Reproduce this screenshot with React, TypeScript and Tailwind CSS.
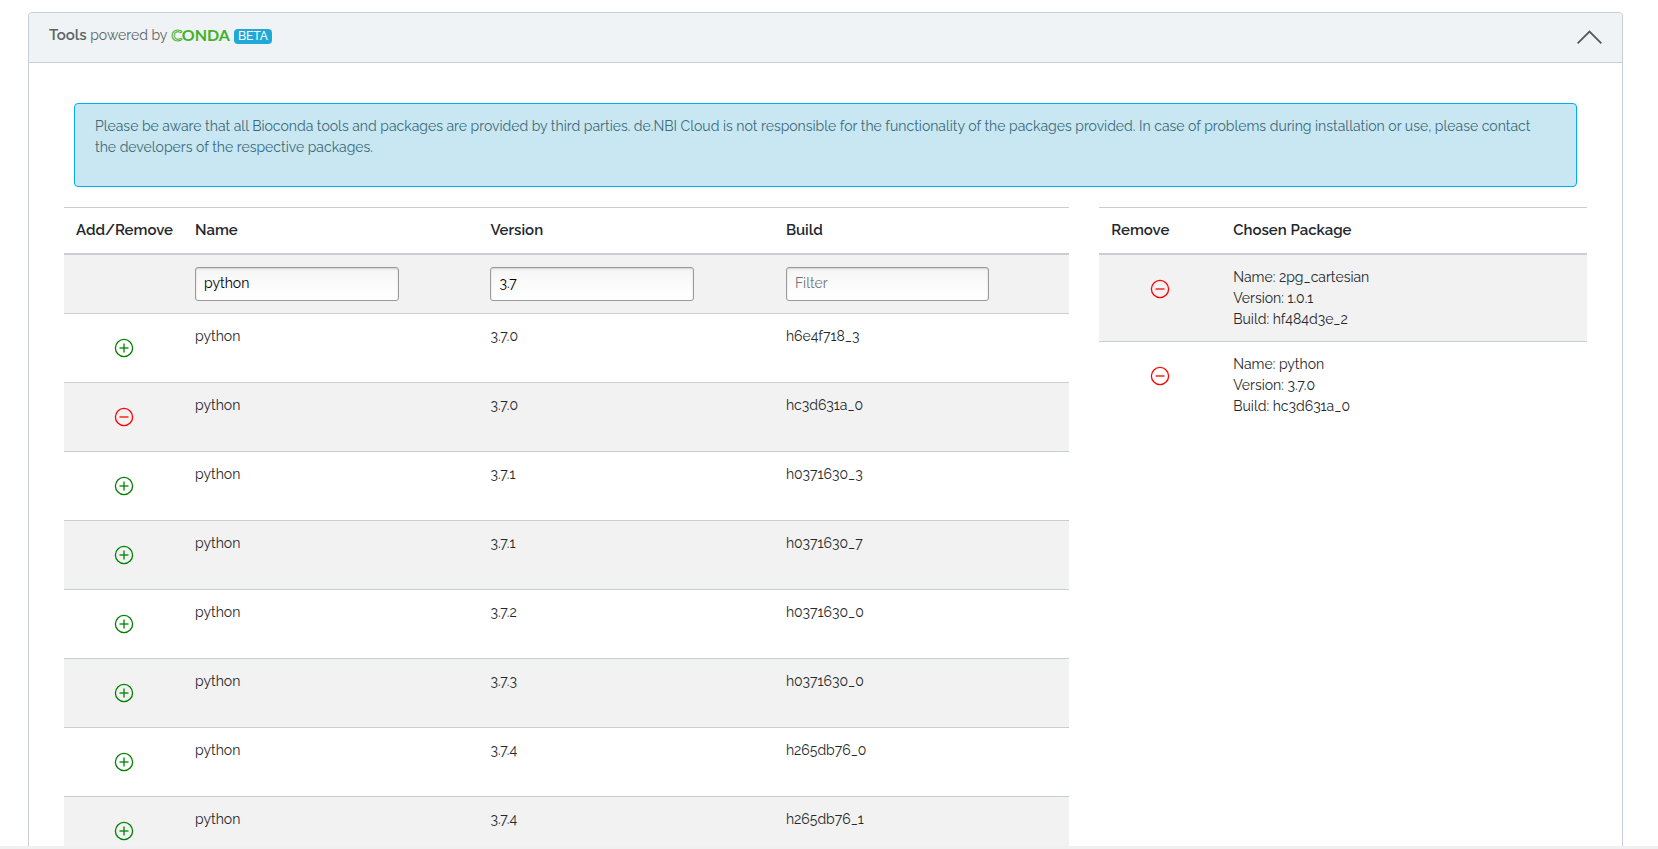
import { useState } from "react";

type Pkg = { name: string; version: string; build: string };

const packages: Pkg[] = [
  { name: "python", version: "3.7.0", build: "h6e4f718_3" },
  { name: "python", version: "3.7.0", build: "hc3d631a_0" },
  { name: "python", version: "3.7.1", build: "h0371630_3" },
  { name: "python", version: "3.7.1", build: "h0371630_7" },
  { name: "python", version: "3.7.2", build: "h0371630_0" },
  { name: "python", version: "3.7.3", build: "h0371630_0" },
  { name: "python", version: "3.7.4", build: "h265db76_0" },
  { name: "python", version: "3.7.4", build: "h265db76_1" },
];

const initialChosen: Pkg[] = [
  { name: "2pg_cartesian", version: "1.0.1", build: "hf484d3e_2" },
  { name: "python", version: "3.7.0", build: "hc3d631a_0" },
];

const same = (a: Pkg, b: Pkg) =>
  a.name === b.name && a.version === b.version && a.build === b.build;

function CircleButton({ kind, label, onClick }: { kind: "add" | "remove"; label: string; onClick: () => void }) {
  return (
    <button
      type="button"
      aria-label={label}
      onClick={onClick}
      className={`mx-auto flex size-11 items-center justify-center ${kind === "add" ? "text-[#008000]" : "text-[#ff0000]"}`}
    >
      <svg width="20" height="20" viewBox="0 0 20 20" fill="none" stroke="currentColor" strokeWidth="1.3" aria-hidden="true">
        <circle cx="10" cy="10" r="8.6" />
        <path d="M5.5 10h9" />
        {kind === "add" && <path d="M10 5.5v9" />}
      </svg>
    </button>
  );
}

function FilterCell({ label, value, onChange }: { label: string; value: string; onChange: (v: string) => void }) {
  return (
    <td className="border-t border-[#c8ced3] p-3">
      <input
        type="text"
        aria-label={label}
        placeholder="Filter"
        value={value}
        onChange={(e) => onChange(e.target.value)}
        className="block h-[34px] w-3/4 rounded-[3px] border border-[#999] bg-linear-to-b from-[#f6f6f6] to-white px-2 pb-0.5 text-black shadow-[inset_0_1px_2px_rgba(0,0,0,0.15)] placeholder:text-[#757575]"
      />
    </td>
  );
}

const th = "border-t border-b-2 border-[#c8ced3] p-3 text-left text-[15px] leading-[21px] font-semibold whitespace-nowrap";
const td = "border-t border-[#c8ced3] p-3 align-top";
const chosenTd = "border-t border-[#c8ced3] px-3 pt-3 pb-[11px] align-top";

export default function App() {
  const [open, setOpen] = useState(true);
  const [filters, setFilters] = useState({ name: "python", version: "3.7", build: "" });
  const [chosen, setChosen] = useState(initialChosen);

  const add = (p: Pkg) => setChosen((c) => [...c, p]);
  const remove = (p: Pkg) => setChosen((c) => c.filter((q) => !same(p, q)));
  const visible = packages.filter(
    (p) => p.name.includes(filters.name) && p.version.includes(filters.version) && p.build.includes(filters.build),
  );

  return (
    <div className="flex h-screen flex-col bg-[#f0f0f0] font-['Raleway','Lato',sans-serif] text-sm leading-[21px] text-[#23282c]">
      <main className="min-h-0 flex-1 overflow-hidden bg-white pt-3 pr-[35px] pl-7">
        <section className="rounded border border-[#c8ced3]">
          <header className="flex items-center justify-between rounded-t border-b border-[#c8ced3] bg-[#f0f3f5] px-5 py-3">
            <h2 className="flex h-[25px] items-start text-[#5c6366]">
              <span>
                <strong className="text-[15px] leading-[21px] font-semibold">Tools</strong> powered by
              </span>
              <span className="ml-1 font-['Lato',sans-serif] text-base leading-5 font-bold text-[#43b02a]" aria-label="CONDA">
                <span className="text-[#f0f3f5] [-webkit-text-stroke:1px_#43b02a]">C</span>ONDA
              </span>
              <span className="mt-1 ml-1 rounded bg-[#20a8d8] px-1 text-xs leading-[15px] font-medium text-white">BETA</span>
            </h2>
            <button type="button" aria-label="Toggle tools" aria-expanded={open} onClick={() => setOpen(!open)}>
              <svg width="25" height="16" viewBox="0 0 25 16" fill="none" stroke="#54585c" strokeWidth="1.8" aria-hidden="true">
                <path d="M.6 13.4 12.5 1.5 24.4 13.4" />
              </svg>
            </button>
          </header>
          {open && (
            <div className="px-[35px] pt-10">
              <div className="mx-2.5 h-21 rounded border border-[#00aeef] bg-[#c9e7f2] py-3 pr-10 pl-5 text-[#3b6b7b]">
                <p>
                  Please be aware that all Bioconda tools and packages are provided by third parties. de.NBI Cloud is not
                  responsible for the functionality of the packages provided. In case of problems during installation or
                  use, please contact the developers of the respective packages.
                </p>
              </div>
              <div className="mt-5 grid grid-cols-[67fr_32.5fr] items-start gap-[30px]">
                <table className="w-full table-fixed border-collapse">
                  <thead>
                    <tr>
                      <th className={`${th} w-[119px]`}>Add/Remove</th>
                      <th className={th}>Name</th>
                      <th className={th}>Version</th>
                      <th className={th}>Build</th>
                    </tr>
                  </thead>
                  <tbody>
                    <tr className="bg-[#f2f2f2]">
                      <td className={td} />
                      <FilterCell label="Filter by name" value={filters.name} onChange={(name) => setFilters({ ...filters, name })} />
                      <FilterCell label="Filter by version" value={filters.version} onChange={(version) => setFilters({ ...filters, version })} />
                      <FilterCell label="Filter by build" value={filters.build} onChange={(build) => setFilters({ ...filters, build })} />
                    </tr>
                    {visible.map((p) => {
                      const picked = chosen.some((q) => same(p, q));
                      return (
                        <tr key={p.version + p.build} className="odd:bg-[#f2f2f2]">
                          <td className={td}>
                            <CircleButton
                              kind={picked ? "remove" : "add"}
                              label={picked ? "Remove package" : "Add package"}
                              onClick={() => (picked ? remove(p) : add(p))}
                            />
                          </td>
                          <td className={td}>{p.name}</td>
                          <td className={td}>{p.version}</td>
                          <td className={td}>{p.build}</td>
                        </tr>
                      );
                    })}
                  </tbody>
                </table>
                <table className="w-full table-fixed border-collapse">
                  <thead>
                    <tr>
                      <th className={`${th} w-1/4`}>Remove</th>
                      <th className={th}>Chosen Package</th>
                    </tr>
                  </thead>
                  <tbody>
                    {chosen.map((p) => (
                      <tr key={p.name + p.version + p.build} className="odd:bg-[#f2f2f2]">
                        <td className={chosenTd}>
                          <CircleButton kind="remove" label="Remove package" onClick={() => remove(p)} />
                        </td>
                        <td className={chosenTd}>
                          <div>Name: {p.name}</div>
                          <div>Version: {p.version}</div>
                          <div>Build: {p.build}</div>
                        </td>
                      </tr>
                    ))}
                  </tbody>
                </table>
              </div>
            </div>
          )}
        </section>
      </main>
      <div className="h-[3px]" />
    </div>
  );
}
